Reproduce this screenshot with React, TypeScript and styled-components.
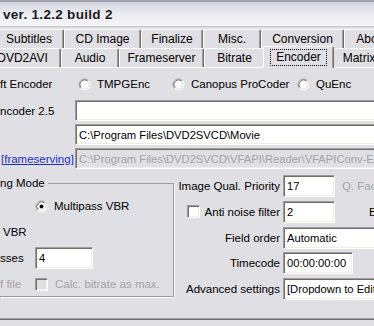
import React from 'react';
import styled, { createGlobalStyle } from 'styled-components';

const FACE = '#e0dfe3';
const SHADOW = '#9d9da1';
const DARK = '#716f64';
const LIGHT = '#f1efe2';

const Global = createGlobalStyle`
  html, body { margin: 0; padding: 0; background: ${FACE}; overflow: hidden; }
  body { font-family: "Liberation Sans", Arial, sans-serif; font-size: 11.5px; color: #000; }
  * { box-sizing: border-box; }
`;

const Window = styled.div`
  width: 374px;
  height: 326px;
  overflow: hidden;
  display: flex;
  flex-direction: column;
  background: ${FACE};
`;

const TitleBar = styled.div`
  height: 27px;
  flex: 0 0 27px;
  border-top: 2px solid #a2a2ae;
  border-bottom: 1px solid #c4c4cc;
  background: linear-gradient(to bottom, #d4d4de 0%, #eaeaf0 45%, #f6f6f9 100%);
  display: flex;
  align-items: center;
  padding-left: 3px;
  font-weight: bold;
  font-size: 13.5px;
  letter-spacing: 0.3px;
  color: #1a1a24;
  white-space: nowrap;
`;

const TabArea = styled.div`
  margin-top: 2px;
  display: flex;
  flex-direction: column;
  white-space: nowrap;
  font-size: 12px;
`;

const TabRow = styled.div<{ $offset: number }>`
  display: flex;
  height: 19px;
  margin-left: ${p => p.$offset}px;
`;

const Tab = styled.div<{ $w: number; $selected?: boolean }>`
  flex: 0 0 ${p => (p.$selected ? p.$w + 4 : p.$w)}px;
  height: ${p => (p.$selected ? 22 : 19)}px;
  margin: ${p => (p.$selected ? '-2px -2px -1px -2px' : '0')};
  border-top: 1px solid #fff;
  border-left: 1px solid #fff;
  border-right: 1px solid ${DARK};
  border-top-left-radius: 2px;
  border-top-right-radius: 2px;
  box-shadow: inset -1px 0 0 ${SHADOW};
  background: ${FACE};
  display: flex;
  align-items: ${p => (p.$selected ? 'flex-start' : 'center')};
  justify-content: center;
  padding-top: ${p => (p.$selected ? 2 : 0)}px;
  position: relative;
  z-index: ${p => (p.$selected ? 1 : 0)};
`;

const Focus = styled.span`
  border: 1px dotted #000;
  padding: 0 5px;
  line-height: 15px;
`;

const Panel = styled.div`
  height: 253px;
  flex: 0 0 253px;
  border-top: 1px solid #fff;
  border-bottom: 1px solid ${DARK};
  box-shadow: inset 0 -1px 0 ${SHADOW};
  padding-top: 6px;
  display: flex;
  flex-direction: column;
  white-space: nowrap;
`;

const Row = styled.div<{ $h?: number; $mt?: number }>`
  display: flex;
  align-items: center;
  height: ${p => p.$h ?? 21}px;
  margin-top: ${p => p.$mt ?? 0}px;
`;

const LeftLabel = styled.div`
  flex: 0 0 75px;
  overflow: hidden;
  display: flex;
  align-items: center;
`;

const LinkText = styled.span`
  color: #1c2ec8;
  text-decoration: underline;
  margin-left: 1px;
`;

const Option = styled.label<{ $w: number }>`
  flex: 0 0 ${p => p.$w}px;
  display: flex;
  align-items: center;
  gap: 6px;
`;

const Field = styled.div<{ $w: number; $disabled?: boolean; $h?: number }>`
  flex: 0 0 ${p => p.$w}px;
  height: ${p => p.$h ?? 21}px;
  border: 1px solid;
  border-color: ${SHADOW} #fff #fff ${SHADOW};
  box-shadow: inset 1px 1px 0 ${DARK}, inset -1px -1px 0 ${LIGHT};
  background: ${p => (p.$disabled ? FACE : '#fff')};
  color: ${p => (p.$disabled ? '#a3a3a3' : '#000')};
  padding-left: 3px;
  display: flex;
  align-items: center;
  overflow: hidden;
  font-size: 11.2px;
`;

const Lower = styled.div`
  display: flex;
  margin-top: 6px;
`;

const Group = styled.fieldset`
  flex: 0 0 174px;
  margin: 1px 0 0 0;
  padding: 5px 0 1px 0;
  border: 1px solid ${SHADOW};
  border-left: none;
  box-shadow: 1px 1px 0 #fff;
  display: flex;
  flex-direction: column;
  gap: 4px;
  align-self: flex-start;
`;

const Legend = styled.legend`
  padding: 0 3px 0 0;
  line-height: 14px;
`;

const GroupRow = styled.div<{ $indent?: number }>`
  display: flex;
  align-items: center;
  height: 22px;
  padding-left: ${p => p.$indent ?? 0}px;
`;

const ShortLabel = styled.span<{ $disabled?: boolean }>`
  flex: 0 0 35px;
  color: ${p => (p.$disabled ? '#a3a3a3' : '#000')};
`;

const Muted = styled.span<{ $ml?: number }>`
  color: #a3a3a3;
  margin-left: ${p => p.$ml ?? 0}px;
`;

const Dim = styled.span<{ $ml?: number }>`
  margin-left: ${p => p.$ml ?? 0}px;
`;

const RightCol = styled.div`
  margin-left: 2px;
  display: flex;
  flex-direction: column;
  gap: 3.75px;
`;

const FormRow = styled.div`
  display: flex;
  align-items: center;
  height: 22px;
`;

const FormLabel = styled.div`
  flex: 0 0 104px;
  margin-right: 3px;
  display: flex;
  justify-content: flex-end;
  align-items: center;
  gap: 5px;
`;

const CheckBox = styled.span<{ $disabled?: boolean }>`
  display: inline-block;
  width: 13px;
  height: 13px;
  flex: 0 0 13px;
  border: 1px solid;
  border-color: ${SHADOW} #fff #fff ${SHADOW};
  box-shadow: inset 1px 1px 0 ${DARK}, inset -1px -1px 0 ${LIGHT};
  background: ${p => (p.$disabled ? FACE : '#fff')};
`;

const Radio: React.FC<{ checked?: boolean }> = ({ checked }) => (
  <svg width="13" height="13" viewBox="0 0 13 13" style={{ flex: '0 0 13px' }}>
    <circle cx="6.5" cy="6.5" r="5.5" fill="#fff" />
    <path d="M 2.61 10.39 A 5.5 5.5 0 0 1 10.39 2.61" stroke={SHADOW} fill="none" />
    <path d="M 10.39 2.61 A 5.5 5.5 0 0 1 2.61 10.39" stroke="#fff" fill="none" />
    <path d="M 3.32 9.68 A 4.5 4.5 0 0 1 9.68 3.32" stroke={DARK} fill="none" />
    <path d="M 9.68 3.32 A 4.5 4.5 0 0 1 3.32 9.68" stroke={FACE} fill="none" />
    {checked && <circle cx="6.5" cy="6.5" r="2" fill="#000" />}
  </svg>
);

const row1 = [
  { label: 'Subtitles', w: 70 },
  { label: 'CD Image', w: 77 },
  { label: 'Finalize', w: 62 },
  { label: 'Misc.', w: 58 },
  { label: 'Conversion', w: 83 },
  { label: 'About', w: 56 },
];

const row2 = [
  { label: 'DVD2AVI', w: 77 },
  { label: 'Audio', w: 58 },
  { label: 'Frameserver', w: 85 },
  { label: 'Bitrate', w: 61 },
  { label: 'Encoder', w: 67, selected: true },
  { label: 'Matrix', w: 54 },
];

export default function App() {
  return (
    <Window>
      <Global />
      <TitleBar>ver. 1.2.2 build 2</TitleBar>
      <TabArea>
        <TabRow $offset={-6}>
          {row1.map(t => (
            <Tab key={t.label} $w={t.w}>{t.label}</Tab>
          ))}
        </TabRow>
        <TabRow $offset={-16}>
          {row2.map(t => (
            <Tab key={t.label} $w={t.w} $selected={t.selected}>
              {t.selected ? <Focus>{t.label}</Focus> : t.label}
            </Tab>
          ))}
        </TabRow>
      </TabArea>
      <Panel>
        <Row $h={20}>
          <LeftLabel>ft Encoder</LeftLabel>
          <Option $w={3} />
          <Option $w={94}><Radio />TMPGEnc</Option>
          <Option $w={125}><Radio />Canopus ProCoder</Option>
          <Option $w={80}><Radio />QuEnc</Option>
        </Row>
        <Row $mt={6}>
          <LeftLabel>ncoder 2.5</LeftLabel>
          <Field $w={320} />
        </Row>
        <Row $mt={3}>
          <LeftLabel />
          <Field $w={320}>C:\Program Files\DVD2SVCD\Movie</Field>
        </Row>
        <Row $mt={3}>
          <LeftLabel><LinkText>[frameserving]</LinkText></LeftLabel>
          <Field $w={320} $disabled>C:\Program Files\DVD2SVCD\VFAPI\Reader\VFAPIConv-EN.exe</Field>
        </Row>
        <Lower>
          <Group>
            <Legend>ng Mode</Legend>
            <GroupRow $indent={35}>
              <Option $w={120}><Radio checked />Multipass VBR</Option>
            </GroupRow>
            <GroupRow $indent={3}>VBR</GroupRow>
            <GroupRow>
              <ShortLabel>sses</ShortLabel>
              <Field $w={58} $h={22}>4</Field>
            </GroupRow>
            <GroupRow>
              <ShortLabel $disabled>f file</ShortLabel>
              <CheckBox $disabled />
              <Muted $ml={7}>Calc. bitrate as max.</Muted>
            </GroupRow>
          </Group>
          <RightCol>
            <FormRow>
              <FormLabel>Image Qual. Priority</FormLabel>
              <Field $w={52} $h={22}>17</Field>
              <Muted $ml={7}>Q. Factor</Muted>
            </FormRow>
            <FormRow>
              <FormLabel><CheckBox />Anti noise filter</FormLabel>
              <Field $w={52} $h={22}>2</Field>
              <Dim $ml={34}>Bitrate</Dim>
            </FormRow>
            <FormRow>
              <FormLabel>Field order</FormLabel>
              <Field $w={100} $h={22}>Automatic</Field>
            </FormRow>
            <FormRow>
              <FormLabel>Timecode</FormLabel>
              <Field $w={70} $h={22}>00:00:00:00</Field>
            </FormRow>
            <FormRow>
              <FormLabel>Advanced settings</FormLabel>
              <Field $w={100} $h={22}>[Dropdown to Edit]</Field>
            </FormRow>
          </RightCol>
        </Lower>
      </Panel>
    </Window>
  );
}
